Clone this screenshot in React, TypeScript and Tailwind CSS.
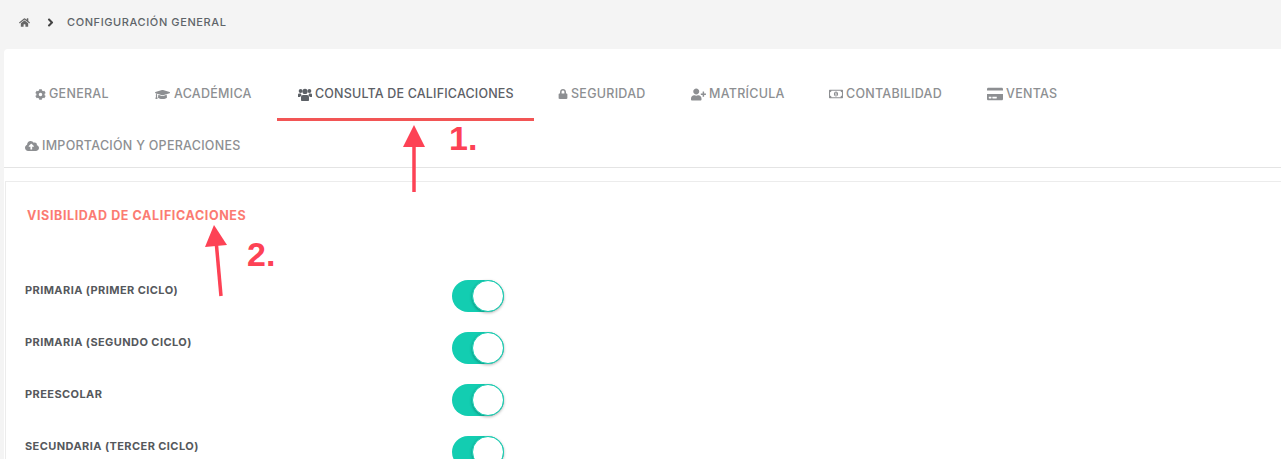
import React from "react";
import { FaHome, FaCog, FaGraduationCap, FaLock, FaUserPlus, FaRegMoneyBillAlt, FaCreditCard, FaCloudUploadAlt, FaAngleRight } from "react-icons/fa";

const font = { fontFamily: "Inter, 'Liberation Sans', sans-serif" };

function UsersIcon() {
  return (
    <svg className="mr-[3px] h-[13px] w-[14px]" viewBox="0 0 14 13" fill="currentColor">
      <circle cx="2.6" cy="3" r="1.9" />
      <circle cx="11.4" cy="3" r="1.9" />
      <circle cx="7" cy="3.4" r="2.6" />
      <path d="M0 9V6.6C0 5.8.6 5.4 1.4 5.4h1.4c.2.8.6 1.4 1 1.8-.9.4-1.4 1-1.6 1.8H0zM14 9V6.6c0-.8-.6-1.2-1.4-1.2h-1.4c-.2.8-.6 1.4-1 1.8.9.4 1.4 1 1.6 1.8H14z" />
      <path d="M3 12V9.2C3 7.9 3.9 7 5 7h4c1.1 0 2 .9 2 2.2V12c0 .6-.5 1-1 1H4c-.5 0-1-.4-1-1z" />
    </svg>
  );
}

function Tab({ icon, label, active, w, cls }: { icon: React.ReactNode; label: string; active?: boolean; w: string; cls: string }) {
  return (
    <div className={`flex shrink-0 items-center pl-[21px] border-b-[3px] text-[12.5px] font-medium whitespace-nowrap ${w} ${cls} ${active ? "border-[#f25555] text-[#5c6066] tracking-[0.18px]" : "border-transparent text-[#8d8f92] tracking-[0.27px]"}`}>
      {icon}
      <span>{label}</span>
    </div>
  );
}

function Row({ label }: { label: string }) {
  return (
    <div className="flex h-[52px] items-start">
      <div className="w-[446px] pt-[2px] pl-[19px] text-[11px] font-bold tracking-[0.42px] text-[#55585c]">{label}</div>
      <div className="relative h-[32px] w-[52px] rounded-full bg-[#13cdb1]">
        <div className="absolute right-0 top-0 h-[32px] w-[32px] rounded-full border border-[#13cdb1] bg-white shadow-[0_1px_3px_rgba(0,0,0,0.3)]" />
      </div>
    </div>
  );
}

export default function App() {
  return (
    <div className="h-[459px] w-[1281px] overflow-hidden bg-[#f4f4f4]" style={font}>
      <div className="flex h-[49px] items-center pb-[5px] pl-[19px] text-[#5e6469]">
        <FaHome className="h-[11px] w-[11px] text-[#666]" />
        <FaAngleRight className="ml-[14px] h-[13px] w-[13px] text-[#444]" />
        <span className="ml-[10px] text-[11px] font-medium tracking-[0.6px]">CONFIGURACIÓN GENERAL</span>
      </div>
      <div className="ml-[4px] h-[410px] rounded-tl-[4px] bg-white">
        <div className="h-[20px]" />
        <div className="flex flex-wrap border-b border-[#e4e4e4]">
          <Tab w="w-[116px]" cls="ml-[10px] h-[52px] pt-[1px]" label="GENERAL" icon={<FaCog className="mr-[3px] h-[11px] w-[11px]" />} />
          <Tab w="w-[139px]" cls="ml-[4px] h-[52px] pt-[1px]" label="ACADÉMICA" icon={<FaGraduationCap className="mr-[4px] h-[15px] w-[15px]" />} />
          <Tab w="w-[257px]" cls="ml-[4px] h-[52px] pt-[1px]" active label="CONSULTA DE CALIFICACIONES" icon={<UsersIcon />} />
          <Tab w="w-[129px]" cls="ml-[3px] h-[52px] pt-[1px]" label="SEGURIDAD" icon={<FaLock className="mr-[3px] h-[10px] w-[10px]" />} />
          <Tab w="w-[134px]" cls="ml-[4px] h-[52px] pt-[1px]" label="MATRÍCULA" icon={<FaUserPlus className="mr-[3px] h-[15px] w-[15px]" />} />
          <Tab w="w-[154px]" cls="ml-[4px] h-[52px] pt-[1px]" label="CONTABILIDAD" icon={<FaRegMoneyBillAlt className="mr-[3px] h-[14px] w-[14px]" />} />
          <Tab w="w-[111px]" cls="ml-[4px] h-[52px] pt-[1px]" label="VENTAS" icon={<FaCreditCard className="mr-[3px] h-[16px] w-[16px]" />} />
          <div className="w-full" />
          <Tab w="w-[260px]" cls="h-[46px] pt-[7px]" label="IMPORTACIÓN Y OPERACIONES" icon={<FaCloudUploadAlt className="mr-[3px] h-[14px] w-[14px]" />} />
        </div>
        <div className="h-[13px]" />
        <div className="ml-[1px] border-t border-l border-[#ececec] pt-[25px]">
          <div className="pl-[21px] text-[12.5px] font-bold tracking-[0.62px] text-[#fb7b72]">VISIBILIDAD DE CALIFICACIONES</div>
          <div className="h-[54px]" />
          <Row label="PRIMARIA (PRIMER CICLO)" />
          <Row label="PRIMARIA (SEGUNDO CICLO)" />
          <Row label="PREESCOLAR" />
          <Row label="SECUNDARIA (TERCER CICLO)" />
        </div>
      </div>
      <svg className="pointer-events-none absolute left-0 top-0 h-[459px] w-[1281px]" viewBox="0 0 1281 459">
        <line x1="414" y1="192" x2="414" y2="140" stroke="#fd4255" strokeWidth="3.5" />
        <polygon points="414,125 403,147 425,147" fill="#fd4255" />
        <line x1="221" y1="296" x2="216" y2="240" stroke="#fd4255" strokeWidth="3.5" />
        <polygon points="214,225 205,247 227,245" fill="#fd4255" />
      </svg>
      <div className="absolute left-[449px] top-[117px] text-[34px] leading-[42px] font-bold text-[#fd4255]" style={{ fontFamily: "'Liberation Sans', sans-serif" }}>1.</div>
      <div className="absolute left-[247px] top-[233px] text-[34px] leading-[42px] font-bold text-[#fd4255]" style={{ fontFamily: "'Liberation Sans', sans-serif" }}>2.</div>
    </div>
  );
}
